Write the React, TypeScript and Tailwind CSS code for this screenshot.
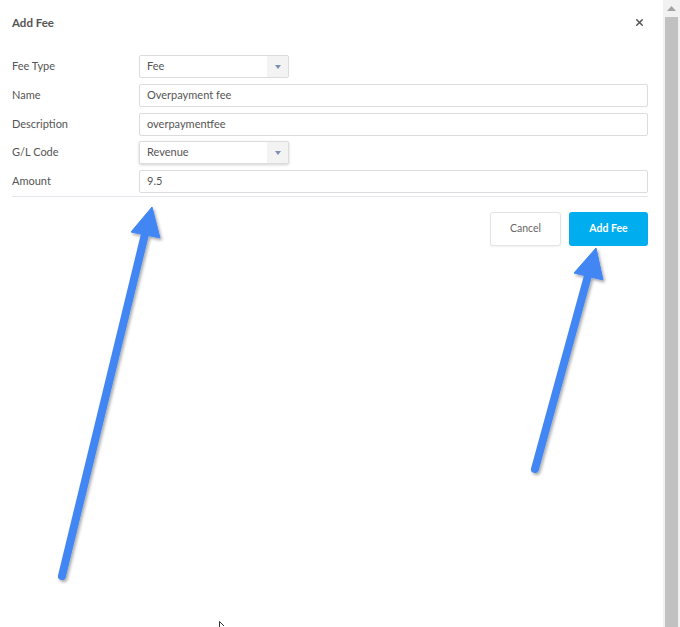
import { X } from "lucide-react";

const FONT = { fontFamily: "Lato, 'Noto Sans', sans-serif" };

export default function App() {
  return (
    <div className="relative flex h-[627px] w-[680px] overflow-hidden bg-white text-[11px] text-[#555]" style={FONT}>
      <div className="flex-1 pl-3 pr-[15px]">
        {/* header */}
        <div className="flex h-[45px] items-center justify-between">
          <h2 className="text-[11.5px] font-bold text-[#555]">Add Fee</h2>
          <button className="mr-[3px] text-[#555]">
            <X size={11} strokeWidth={3.2} />
          </button>
        </div>

        {/* form */}
        <div className="pt-[10px]">
          <Row label="Fee Type">
            <Select value="Fee" />
          </Row>
          <Row label="Name">
            <Input value="Overpayment fee" />
          </Row>
          <Row label="Description" tight>
            <Input value="overpaymentfee" />
          </Row>
          <Row label="G/L Code">
            <Select value="Revenue" focused />
          </Row>
          <Row label="Amount" last>
            <Input value="9.5" />
          </Row>
        </div>

        <div className="mt-[3px] border-t border-[#e4e7eb]" />

        <div className="mt-[15px] flex justify-end gap-2">
          <button className="h-[34px] w-[71px] rounded-[3px] border border-[#e3e3e3] bg-white text-[10.5px] text-[#666] shadow-[0_1px_2px_rgba(0,0,0,0.06)]">
            Cancel
          </button>
          <button className="h-[34px] w-[79px] rounded-[3px] bg-[#00aeef] text-[10.5px] font-bold text-white">
            Add Fee
          </button>
        </div>
      </div>

      {/* scrollbar */}
      <div className="flex w-[17px] flex-col bg-[#f1f1f1]">
        <div className="flex h-[17px] items-center justify-center">
          <svg width="9" height="5" viewBox="0 0 9 5">
            <path d="M4.5 0 L9 5 L0 5 Z" fill="#a3a3a3" />
          </svg>
        </div>
        <div className="ml-[2px] w-[13px] flex-1 bg-[#c1c1c1]" />
      </div>

      {/* annotation arrows */}
      <svg className="pointer-events-none absolute inset-0" width="680" height="627" viewBox="0 0 680 627">
        <defs>
          <filter id="sh" x="-20%" y="-20%" width="140%" height="140%">
            <feDropShadow dx="1.5" dy="2" stdDeviation="1.5" floodColor="#000" floodOpacity="0.35" />
          </filter>
        </defs>
        <g filter="url(#sh)" fill="#4286f4" stroke="#4286f4">
          <line x1="62" y1="576" x2="146" y2="230" strokeWidth="8" strokeLinecap="round" />
          <polygon points="152,207 131,232 160,238" strokeWidth="1" strokeLinejoin="round" />
          <line x1="535" y1="469" x2="589" y2="272" strokeWidth="8" strokeLinecap="round" />
          <polygon points="596,248 574,273 603,280" strokeWidth="1" strokeLinejoin="round" />
        </g>
        {/* mouse pointer */}
        <path d="M219.5 621.5 L219.5 627 M219.5 621.5 L224 626" stroke="#333" strokeWidth="1" fill="none" />
      </svg>
    </div>
  );
}

function Row({ label, children, tight, last }: { label: string; children: React.ReactNode; tight?: boolean; last?: boolean }) {
  return (
    <div className={`flex items-center ${last ? "" : tight ? "mb-[5px]" : "mb-[6px]"}`}>
      <label className="w-[127px] shrink-0">{label}</label>
      <div className="flex-1">{children}</div>
    </div>
  );
}

function Input({ value }: { value: string }) {
  return (
    <div className="flex h-[23px] items-center rounded-[2px] border border-[#dcdcdc] bg-white px-[7px] text-[#555]">
      {value}
    </div>
  );
}

function Select({ value, focused }: { value: string; focused?: boolean }) {
  return (
    <div
      className={`flex h-[23px] w-[150px] items-center rounded-[2px] border border-[#dcdcdc] bg-white ${
        focused ? "shadow-[0_1px_3px_rgba(0,0,0,0.18)]" : ""
      }`}
    >
      <span className="flex-1 px-[7px]">{value}</span>
      <span className="flex h-full w-[21px] items-center justify-center bg-[#f3f3f3]">
        <svg width="6" height="4" viewBox="0 0 6 4">
          <path d="M0 0 L6 0 L3 4 Z" fill="#7d8fb3" />
        </svg>
      </span>
    </div>
  );
}
